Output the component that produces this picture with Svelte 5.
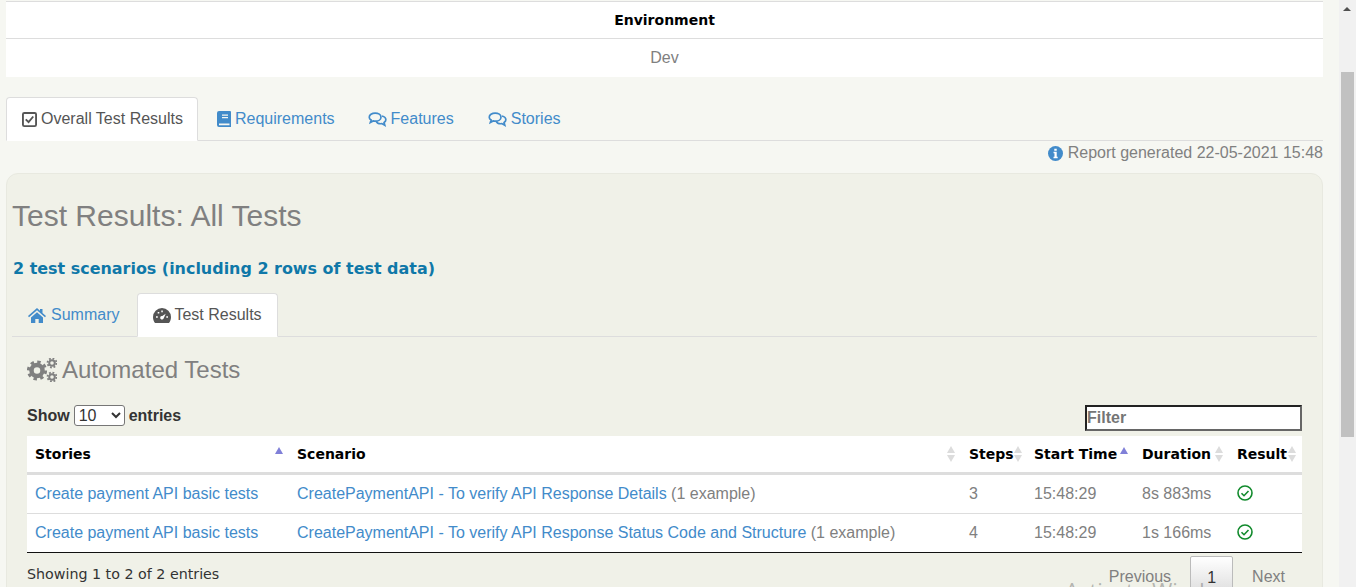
<script>
	const rows = [
		{ scenario: 'CreatePaymentAPI - To verify API Response Details', steps: 3, duration: '8s 883ms' },
		{ scenario: 'CreatePaymentAPI - To verify API Response Status Code and Structure', steps: 4, duration: '1s 166ms' }
	];
	const columns = [
		{ label: 'Stories', sort: 'asc' },
		{ label: 'Scenario', sort: 'both' },
		{ label: 'Steps', sort: 'both' },
		{ label: 'Start Time', sort: 'asc' },
		{ label: 'Duration', sort: 'both' },
		{ label: 'Result', sort: 'both' }
	];
</script>

{#snippet comments()}
	<svg class="icon" viewBox="0 0 20 16" width="19" height="15" fill="none" stroke="currentColor" stroke-width="1.8">
		<path d="M7.500 1.200c3.400 0 6.200 1.900 6.200 4.300s-2.800 4.300-6.200 4.300c-.8 0-1.500-.1-2.200-.3L2.400 11.200l.8-2.600C1.900 7.700 1.200 6.700 1.200 5.500 1.200 3.100 4.100 1.200 7.500 1.200z" />
		<path d="M14.800 4.300c2.400.6 4.100 2.100 4.100 3.900 0 1.200-.7 2.200-1.900 3l.8 3-3.200-1.800c-2.500.4-4.900-.4-6-2.500" />
	</svg>
{/snippet}

{#snippet check()}
	<svg class="check" viewBox="0 0 16 16" width="16" height="16" fill="none" stroke="#118a2c" stroke-width="1.6">
		<circle cx="8" cy="8" r="7" />
		<path d="M4.500 8.200l2.500 2.500 4.500-4.700" />
	</svg>
{/snippet}

<div class="page">
	<table class="env">
		<thead><tr><th>Environment</th></tr></thead>
		<tbody><tr><td>Dev</td></tr></tbody>
	</table>

	<ul class="tabs top">
		<li class="active">
			<svg class="icon" viewBox="0 0 16 16" width="15" height="15" fill="none" stroke="currentColor" stroke-width="2">
				<rect x="1" y="1" width="14" height="14" rx="1.500" />
				<path d="M4 7.800l3 3 5-6" />
			</svg>
			Overall Test Results
		</li>
		<li class="book">
			<svg class="icon" viewBox="0 0 14 16" width="14" height="16">
				<path fill="currentColor" fill-rule="evenodd" d="M2 0h11a1 1 0 0 1 1 1v15H2a2 2 0 0 1-2-2V2a2 2 0 0 1 2-2zM5 3.500v1.200h6V3.500zM5 6v1.200h6V6zM2 12.500v1.800h10.500v-1.800z" />
			</svg>
			<a href="#top">Requirements</a>
		</li>
		<li>{@render comments()} <a href="#top">Features</a></li>
		<li>{@render comments()} <a href="#top">Stories</a></li>
	</ul>

	<div class="generated">
		<svg class="icon" viewBox="0 0 16 16" width="15" height="15">
			<circle cx="8" cy="8" r="8" fill="#428bca" />
			<path fill="#fff" d="M6.700 2.800h2.600v2.200H6.700zM5.900 6.200h3.400v5.200h1v1.600H5.900v-1.600h1V7.800h-1z" />
		</svg>
		Report generated 22-05-2021 15:48
	</div>

	<section class="panel">
		<h2>Test Results: All Tests</h2>
		<h4>2 test scenarios (including 2 rows of test data)</h4>

		<ul class="tabs inner">
			<li>
				<svg class="icon" viewBox="0 0 18 15" width="18" height="15">
					<path fill="currentColor" d="M9 0l3 2.700V1h2.500v4L18 8.100l-1 1.100L9 2.300 1 9.200 0 8.100zM3 9.500L9 4.300l6 5.200V15h-4.300v-4H7.300v4H3z" />
				</svg>
				<a href="#top">Summary</a>
			</li>
			<li class="active">
				<svg class="icon" viewBox="0 0 18 15" width="18" height="15">
					<path fill="currentColor" fill-rule="evenodd" d="M9 0a9 9 0 0 1 9 9c0 2.200-.7 4.300-2 6H2C.7 13.300 0 11.200 0 9a9 9 0 0 1 9-9zM3 8.200v1.600h1.800V8.200zM4.700 4v1.600h1.600V4zM8.300 2.500v1.700h1.500V2.500zM12.700 5.800L9.300 8a1.800 1.800 0 1 0 1.300 2.500zM13.300 8.200v1.600H15V8.200z" />
				</svg>
				Test Results
			</li>
		</ul>

		<h3>
			<svg class="gears" viewBox="0 0 30 24" width="30" height="24" fill="none" stroke="currentColor">
				<circle cx="10" cy="12.500" r="5.500" stroke-width="4.500" />
				<circle cx="10" cy="12.500" r="8.600" stroke-width="3" stroke-dasharray="3.400 3.350" />
				<circle cx="25" cy="5" r="2.800" stroke-width="2" />
				<circle cx="25" cy="5" r="4.500" stroke-width="1.800" stroke-dasharray="1.800 1.730" />
				<circle cx="25" cy="19" r="2.800" stroke-width="2" />
				<circle cx="25" cy="19" r="4.500" stroke-width="1.800" stroke-dasharray="1.800 1.730" />
			</svg>
			Automated Tests
		</h3>

		<div class="controls">
			<label class="length">
				Show
				<select>
					<option>10</option>
				</select>
				entries
			</label>
			<input class="filter" type="text" placeholder="Filter" />
		</div>

		<table class="results">
			<colgroup>
				<col style="width: 262px" />
				<col style="width: 672px" />
				<col style="width: 65px" />
				<col style="width: 108px" />
				<col style="width: 95px" />
				<col style="width: 73px" />
			</colgroup>
			<thead>
				<tr>
					{#each columns as col}
						<th>
							<div class="th">
								<span>{col.label}</span>
								<span class="sort" class:asc={col.sort === 'asc'}>
									<i class="up"></i>
									<i class="down"></i>
								</span>
							</div>
						</th>
					{/each}
				</tr>
			</thead>
			<tbody>
				{#each rows as row}
					<tr>
						<td><a href="#top">Create payment API basic tests</a></td>
						<td><a href="#top">{row.scenario}</a> (1 example)</td>
						<td>{row.steps}</td>
						<td>15:48:29</td>
						<td>{row.duration}</td>
						<td>{@render check()}</td>
					</tr>
				{/each}
			</tbody>
		</table>

		<div class="footer">
			<span class="info">Showing 1 to 2 of 2 entries</span>
			<div class="paging">
				<span>Previous</span>
				<span class="current">1</span>
				<span>Next</span>
			</div>
		</div>
	</section>
</div>

<div class="watermark">Activate Windows</div>

<div class="scrollbar">
	<span class="arrow"></span>
	<span class="thumb"></span>
</div>

<style>
	:global(html),
	:global(body) {
		height: 587px;
		overflow: hidden;
		background: #f6f7f2;
	}
	.page {
		padding: 0 33px 0 6px;
		font-family: 'Liberation Sans', Arial, sans-serif;
		font-size: 16px;
		line-height: 1.25;
		color: #808080;
	}
	a {
		color: #428bca;
		text-decoration: none;
	}
	.env {
		width: 100%;
		margin-top: 1px;
		background: #fff;
		border-collapse: collapse;
		border-top: 1px solid #ddd;
		text-align: center;
	}
	.env th {
		height: 34px;
		padding: 2px 0 0;
		font-family: 'DejaVu Sans', Verdana, sans-serif;
		font-size: 14px;
		color: #000;
		border-bottom: 1px solid #ddd;
	}
	.env td {
		height: 38px;
		padding: 0;
	}
	.tabs {
		display: flex;
		margin: 0;
		padding: 0;
		list-style: none;
		height: 44px;
		border-bottom: 1px solid #ddd;
		box-sizing: border-box;
		color: #428bca;
	}
	.tabs.top {
		margin-top: 20px;
	}
	.tabs li {
		height: 44px;
		padding: 0 15px;
		margin-right: 2px;
		box-sizing: border-box;
		border: 1px solid transparent;
		display: flex;
		align-items: center;
		gap: 4px;
		white-space: nowrap;
	}
	.tabs li.active {
		padding-right: 14px;
		margin-right: 3px;
		background: #fff;
		color: #555;
		border-color: #ddd;
		border-bottom-color: #fff;
		border-radius: 4px 4px 0 0;
	}
	.tabs li.book {
		margin-right: 1px;
	}
	.inner li:first-child {
		gap: 5px;
	}
	.tabs.inner li.active {
		gap: 3px;
		padding-right: 15px;
	}
	.icon {
		flex: none;
	}
	.generated {
		display: flex;
		justify-content: flex-end;
		align-items: center;
		gap: 5px;
		height: 24px;
	}
	.panel {
		margin-top: 8px;
		padding: 0 5px;
		height: 500px;
		background: #f0f1e8;
		border: 1px solid #e8e9e0;
		border-radius: 12px;
	}
	h2 {
		margin: 25px 0 0;
		font-size: 30px;
		font-weight: 400;
		line-height: 34px;
		color: #808080;
	}
	h4 {
		margin: 27px 0 0 1px;
		font-family: 'DejaVu Sans', Verdana, sans-serif;
		font-size: 15.95px;
		line-height: 18px;
		color: #0f78a8;
	}
	.panel .tabs {
		margin-top: 15px;
	}
	h3 {
		display: flex;
		align-items: center;
		gap: 5px;
		margin: 19px 0 0 15px;
		font-size: 24px;
		font-weight: 400;
		line-height: 28px;
		color: #808080;
	}
	.controls {
		display: flex;
		justify-content: space-between;
		align-items: flex-start;
		margin: 21px 15px 0 15px;
		height: 31px;
		color: #333;
	}
	.length {
		display: flex;
		align-items: center;
		gap: 4px;
		font-weight: 700;
		height: 21px;
	}
	select {
		width: 51px;
		height: 21px;
		padding: 0;
		background: #fff;
		border: 1px solid #767676;
		border-radius: 3px;
		font-family: inherit;
		font-size: 16px;
		color: #333;
	}
	.filter {
		width: 217px;
		height: 26px;
		padding: 0;
		box-sizing: border-box;
		border: 2px solid;
		border-color: #222 #666 #666 #222;
		background: #fff;
		font-family: inherit;
		font-size: 16px;
		font-weight: 700;
	}
	.filter::placeholder {
		color: #757575;
		opacity: 1;
	}
	.results {
		width: 1275px;
		margin-left: 15px;
		table-layout: fixed;
		background: #fff;
		border-collapse: collapse;
		border-bottom: 1px solid #111;
	}
	.results th {
		height: 34px;
		padding: 2px 6px 0 8px;
		text-align: left;
		font-family: 'DejaVu Sans', Verdana, sans-serif;
		font-size: 14px;
		color: #000;
		border-bottom: 3px solid #ddd;
	}
	.th {
		display: flex;
		justify-content: space-between;
		align-items: center;
	}
	.sort {
		display: flex;
		flex-direction: column;
		gap: 2px;
		margin-top: -2px;
	}
	.sort i {
		display: block;
		width: 0;
		height: 0;
		border-left: 4px solid transparent;
		border-right: 4px solid transparent;
	}
	.up {
		border-bottom: 7px solid #dcdcdc;
	}
	.down {
		border-top: 7px solid #dcdcdc;
	}
	.asc {
		margin-top: -8px;
	}
	.asc .up {
		border-bottom-color: #8080d8;
	}
	.asc .down {
		visibility: hidden;
		height: 0;
		border-top-width: 0;
	}
	.results td {
		height: 38px;
		padding: 0 8px;
		border-top: 1px solid #ddd;
	}
	.results tbody tr:first-child td {
		border-top: 0;
	}
	.check {
		display: block;
		margin-top: -2px;
	}
	.footer {
		display: flex;
		justify-content: space-between;
		margin: 0 15px 0 15px;
	}
	.info {
		margin-top: 13px;
		font-family: 'DejaVu Sans', Verdana, sans-serif;
		font-size: 14.25px;
		color: #333;
	}
	.paging {
		display: flex;
		align-items: flex-start;
		gap: 19px;
		margin-right: 17px;
		margin-top: 3px;
	}
	.paging span {
		padding-top: 11px;
	}
	.paging .current {
		width: 43px;
		height: 40px;
		box-sizing: border-box;
		text-align: center;
		color: #333;
		background: linear-gradient(#fff, #dcdcdc);
		border: 1px solid #bbb;
		border-radius: 2px;
	}
	.watermark {
		position: absolute;
		left: 1065px;
		top: 574px;
		font-family: 'Open Sans', sans-serif;
		font-size: 22px;
		line-height: 32px;
		color: rgba(120, 120, 120, 0.5);
		pointer-events: none;
		white-space: nowrap;
	}
	.scrollbar {
		position: absolute;
		top: 0;
		right: 0;
		width: 17px;
		height: 587px;
		background: #f1f1f1;
	}
	.arrow {
		position: absolute;
		top: 7px;
		left: 4px;
		border-left: 4px solid transparent;
		border-right: 4px solid transparent;
		border-bottom: 4px solid #505050;
	}
	.thumb {
		position: absolute;
		top: 72px;
		left: 2px;
		width: 13px;
		height: 365px;
		background: #c1c1c1;
	}
</style>
